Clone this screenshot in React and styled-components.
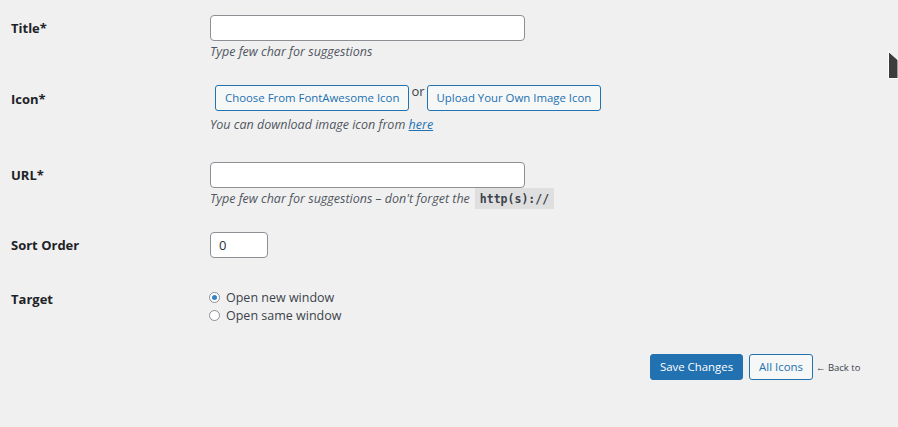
import React, { useState } from 'react';
import styled, { createGlobalStyle } from 'styled-components';

const Global = createGlobalStyle`
  html, body {
    margin: 0;
    padding: 0;
    background: #f0f0f1;
  }
  body {
    font-family: "Open Sans", "Noto Sans", sans-serif;
    font-size: 13px;
    color: #1d2327;
  }
`;

const Page = styled.div`
  position: relative;
  width: 898px;
  height: 427px;
  overflow: hidden;
  background: #f0f0f1;
  padding: 15px 0 0 11px;
  box-sizing: border-box;
`;

const Row = styled.div`
  display: grid;
  grid-template-columns: 199px 1fr;
  margin-bottom: ${p => p.gap || 0}px;
`;

const Label = styled.div`
  font-weight: 700;
  font-size: 13px;
  line-height: 18px;
  padding-top: ${p => p.top || 0}px;
  color: #1d2327;
`;

const Field = styled.div`
  display: flex;
  flex-direction: column;
  align-items: flex-start;
`;

const TextInput = styled.input`
  box-sizing: border-box;
  width: ${p => p.w || 315}px;
  height: 26px;
  border: 1px solid #8c8f94;
  border-radius: 4px;
  background: #fff;
  padding: 0 8px;
  font-family: inherit;
  font-size: 13px;
  color: #2c3338;
  outline: none;
`;

const Desc = styled.p`
  margin: ${p => p.top ?? 2}px 0 0 0;
  font-style: italic;
  font-size: 12.5px;
  line-height: 18px;
  color: #50575e;
  a {
    color: #2271b1;
    text-decoration: underline;
  }
`;

const Code = styled.code`
  display: inline-block;
  margin-left: 5px;
  padding: 2px 5px 1px;
  background: rgba(0, 0, 0, 0.07);
  font-family: "DejaVu Sans Mono", monospace;
  font-style: normal;
  font-weight: 700;
  font-size: 11.5px;
  line-height: 18px;
  color: #3c434a;
`;

const ButtonLine = styled.div`
  display: flex;
  align-items: flex-start;
  margin-left: 5px;
`;

const Button = styled.button`
  box-sizing: border-box;
  height: 26px;
  padding: 0 9px;
  border-radius: 3px;
  border: 1px solid #2271b1;
  background: ${p => (p.primary ? '#2271b1' : '#f6f7f7')};
  color: ${p => (p.primary ? '#fff' : '#2271b1')};
  font-family: inherit;
  font-size: 11.4px;
  line-height: 24px;
  cursor: pointer;
`;

const Or = styled.span`
  margin: -3px 2px 0 2px;
  font-size: 13px;
  line-height: 18px;
  color: #3c434a;
`;

const RadioList = styled.div`
  display: flex;
  flex-direction: column;
  margin-left: -1px;
`;

const RadioLabel = styled.label`
  display: flex;
  align-items: center;
  font-size: 12.5px;
  line-height: 18px;
  color: #3c434a;
`;

const Radio = styled.input`
  appearance: none;
  box-sizing: border-box;
  width: 11px;
  height: 11px;
  margin: 0 6px 2px 0;
  border: 1px solid #8c8f94;
  border-radius: 50%;
  background: #fff;
  position: relative;
  &:checked::before {
    content: '';
    position: absolute;
    left: 2px;
    top: 2px;
    width: 5px;
    height: 5px;
    border-radius: 50%;
    background: #3582c4;
  }
`;

const Actions = styled.div`
  display: flex;
  align-items: center;
  gap: 6px;
  margin-left: 639px;
`;

const BackTo = styled.span`
  font-size: 9.5px;
  color: #3c434a;
  margin-left: -3px;
`;

const Pointer = styled.svg`
  position: absolute;
  right: 0;
  top: 51px;
`;

export default function App() {
  const [target, setTarget] = useState('new');

  return (
    <Page>
      <Global />
      <Row gap={24}>
        <Label top={4}>Title*</Label>
        <Field>
          <TextInput />
          <Desc>Type few char for suggestions</Desc>
        </Field>
      </Row>

      <Row gap={28}>
        <Label top={5}>Icon*</Label>
        <Field>
          <ButtonLine>
            <Button>Choose From FontAwesome Icon</Button>
            <Or>or</Or>
            <Button>Upload Your Own Image Icon</Button>
          </ButtonLine>
          <Desc top={5}>You can download image icon from <a href="#">here</a></Desc>
        </Field>
      </Row>

      <Row gap={23}>
        <Label top={4}>URL*</Label>
        <Field>
          <TextInput />
          <Desc top={0}>
            Type few char for suggestions – don't forget the<Code>http(s)://</Code>
          </Desc>
        </Field>
      </Row>

      <Row gap={31}>
        <Label top={4}>Sort Order</Label>
        <Field>
          <TextInput w={58} defaultValue="0" />
        </Field>
      </Row>

      <Row gap={29}>
        <Label top={1}>Target</Label>
        <RadioList>
          <RadioLabel>
            <Radio type="radio" checked={target === 'new'} onChange={() => setTarget('new')} />
            Open new window
          </RadioLabel>
          <RadioLabel>
            <Radio type="radio" checked={target === 'same'} onChange={() => setTarget('same')} />
            Open same window
          </RadioLabel>
        </RadioList>
      </Row>

      <Actions>
        <Button primary>Save Changes</Button>
        <Button>All Icons</Button>
        <BackTo>← Back to</BackTo>
      </Actions>

      <Pointer width="10" height="28" viewBox="0 0 10 28">
        <polygon points="0.5,0.5 10,9 10,27.5 0.5,27.5" fill="#3c3c3c" stroke="#fff" strokeWidth="1" />
      </Pointer>
    </Page>
  );
}
